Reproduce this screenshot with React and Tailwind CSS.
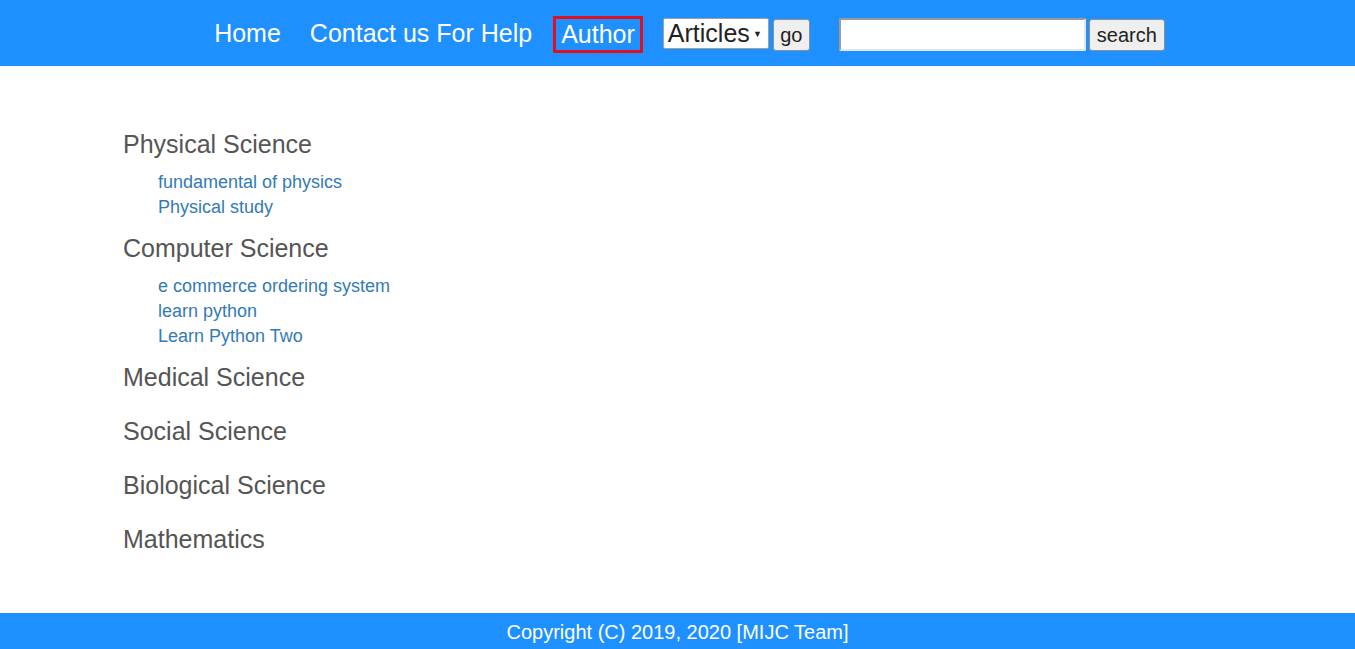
import { useState } from "react"

const sections = [
  { title: "Physical Science", links: ["fundamental of physics", "Physical study"] },
  { title: "Computer Science", links: ["e commerce ordering system", "learn python", "Learn Python Two"] },
  { title: "Medical Science", links: [] },
  { title: "Social Science", links: [] },
  { title: "Biological Science", links: [] },
  { title: "Mathematics", links: [] },
]

export default function App() {
  const [query, setQuery] = useState("")

  return (
    <div className="h-screen flex flex-col bg-white font-['Liberation_Sans',Arial,sans-serif]">
      {/* HEADER */}
      <header className="h-[66px] shrink-0 bg-[#1e90ff] flex items-center justify-center pl-[16px]">
        <a className="text-[25px] leading-[31px] text-white border-[3px] border-transparent px-[5px]">Home</a>
        <a className="ml-[13px] text-[25px] leading-[31px] text-white border-[3px] border-transparent px-[5px]">
          Contact us For Help
        </a>
        <a className="ml-[13px] mt-[3px] text-[25px] leading-[31px] text-white border-[3px] border-[#e0101e] px-[5px]">
          Author
        </a>

        <div className="ml-[20px] relative h-[31px] w-[106px] bg-white border border-[#a0a0a0] rounded-[2px] flex items-center">
          <span className="pl-[4px] text-[25px] leading-none text-[#222]">Articles</span>
          <span className="absolute right-[6px] top-[11px] text-[9px] leading-none text-[#222]">▼</span>
        </div>
        <button className="ml-[4px] mt-[3px] h-[32px] w-[37px] bg-[#efefef] border border-[#8f8f8f] rounded-[3px] text-[20px] leading-none text-[#222]">
          go
        </button>

        <input
          value={query}
          onChange={(e) => setQuery(e.target.value)}
          className="ml-[29px] mt-[3px] h-[33px] w-[247px] bg-white border-2 border-[#9a9a9a] border-b-[#e6e6e6] border-r-[#e6e6e6] rounded-[2px] outline-none px-1 text-[18px]"
        />
        <button className="ml-[3px] mt-[3px] h-[32px] w-[76px] bg-[#efefef] border border-[#8f8f8f] rounded-[3px] text-[20px] leading-none text-[#222]">
          search
        </button>
      </header>

      {/* CONTENT */}
      <main className="flex-1 pt-[63px] pl-[123px]">
        {sections.map((s) => (
          <section key={s.title} className={s.links.length ? "mb-[13px]" : "mb-[24px]"}>
            <h3 className="text-[25px] leading-[30px] text-[#555]">{s.title}</h3>
            {s.links.length > 0 && (
              <ul className="mt-[11px] pl-[35px]">
                {s.links.map((l) => (
                  <li key={l} className="text-[18px] leading-[25px] text-[#337ab7]">
                    <a href="#">{l}</a>
                  </li>
                ))}
              </ul>
            )}
          </section>
        ))}
      </main>

      {/* FOOTER */}
      <footer className="h-[36px] shrink-0 bg-[#1e90ff] flex items-center justify-center pt-[2px] text-[20px] text-white">
        Copyright (C) 2019, 2020 [MIJC Team]
      </footer>
    </div>
  )
}
